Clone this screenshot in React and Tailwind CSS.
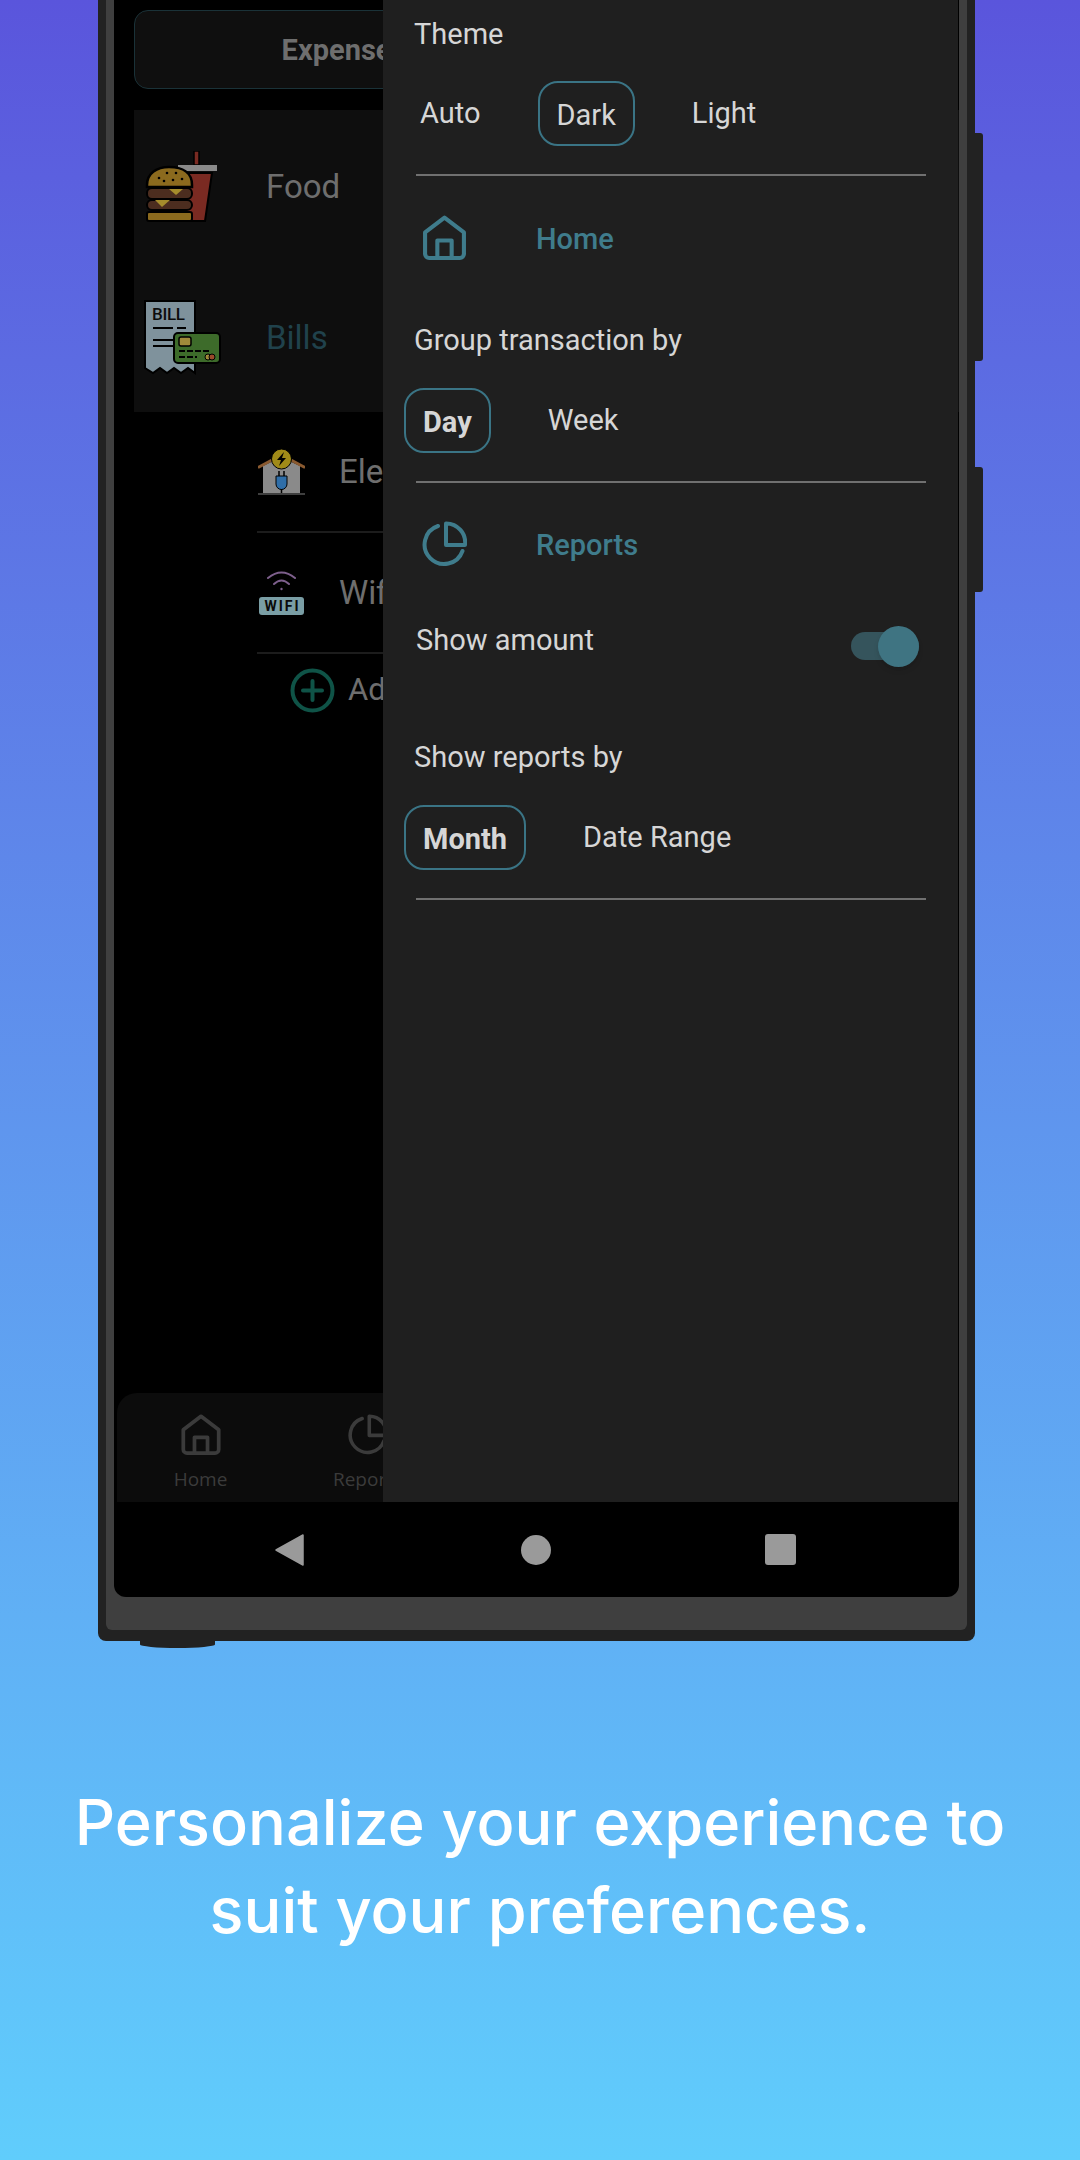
const TEAL = '#3f7c8c'

const HomeIcon = ({ className, color = TEAL }) => (
  <svg viewBox="0 0 42 44" className={className} fill="none" stroke={color} strokeWidth="4" strokeLinejoin="round">
    <path d="M21 2.5 L40 17 V38 a4 4 0 0 1 -4 4 H6 a4 4 0 0 1 -4 -4 V17 Z" />
    <path d="M14 42 V25 H28 V42" />
  </svg>
)

const PieIcon = ({ className, color = TEAL }) => (
  <svg viewBox="0 0 46 46" className={className} fill="none" stroke={color} strokeWidth="4" strokeLinejoin="round">
    <path d="M17 5 A19.5 19.5 0 1 0 41.5 30" strokeLinecap="round" />
    <path d="M25 2.5 A19 19 0 0 1 44 24 H25 Z" />
  </svg>
)

const BurgerIcon = () => (
  <svg viewBox="0 0 74 72" className="w-[74px] h-[72px] shrink-0">
    <rect x="49" y="0" width="5" height="14" fill="#7a2a22" stroke="#000" strokeWidth="1.5" />
    <path d="M36 22 L67 22 L60 70 L36 70 Z" fill="#7a2a22" stroke="#000" strokeWidth="2" />
    <path d="M33 14 H72 V20 H33 Z" fill="#8a8a8a" />
    <path d="M2 34 C2 22 12 16 24 16 C38 16 47 22 47 34 V36 H2 Z" fill="#8b6a1e" stroke="#000" strokeWidth="2.5" />
    <g fill="#000">
      <circle cx="14" cy="27" r="1.3" /><circle cx="22" cy="22" r="1.3" /><circle cx="31" cy="22" r="1.3" />
      <circle cx="19" cy="30" r="1.3" /><circle cx="28" cy="29" r="1.3" /><circle cx="37" cy="28" r="1.3" />
    </g>
    <rect x="2" y="37" width="45" height="11" rx="5" fill="#4c2d1f" stroke="#000" strokeWidth="2" />
    <rect x="2" y="49" width="45" height="10" rx="5" fill="#4c2d1f" stroke="#000" strokeWidth="2" />
    <path d="M24 38 H38 L31 44 Z" fill="#a58c2c" />
    <path d="M10 49 H25 L17 56 Z" fill="#a58c2c" />
    <rect x="2" y="61" width="45" height="9" rx="2" fill="#8b6a1e" stroke="#000" strokeWidth="2" />
  </svg>
)

const BillIcon = () => (
  <svg viewBox="0 0 78 76" className="w-[78px] h-[76px] shrink-0">
    <path d="M2 1 H52 V73 L45 68 L38 73 L31 68 L24 73 L17 68 L10 73 L2 68 Z" fill="#7f929c" stroke="#000" strokeWidth="2" />
    <text x="9" y="20" fontFamily="Roboto, sans-serif" fontSize="17" fontWeight="500" fill="#0c0c0c" textLength="33">BILL</text>
    <path d="M10 28 H30 M34 28 H43 M10 40 H30 M10 46 H30" stroke="#000" strokeWidth="2" />
    <rect x="31" y="33" width="46" height="30" rx="4" fill="#3d6b2a" stroke="#000" strokeWidth="2" />
    <rect x="36" y="37" width="12" height="9" rx="2" fill="#a08a3a" stroke="#000" strokeWidth="1.5" />
    <path d="M36 51 H66 M36 57 H54" stroke="#000" strokeWidth="2" strokeDasharray="6 2" />
    <circle cx="65" cy="57" r="3" fill="#a08a3a" stroke="#000" />
    <circle cx="69" cy="57" r="3" fill="#9a4a2a" stroke="#000" />
  </svg>
)

const ElectricIcon = () => (
  <svg viewBox="0 0 47 46" className="w-[47px] h-[46px] shrink-0 ml-[1px]">
    <path d="M5 17 L23 8 L42 17 V44 H5 Z" fill="#8a8a8a" />
    <path d="M1 18 L14 11 M46 18 L33 11" stroke="#8a5a30" strokeWidth="3" strokeLinecap="round" />
    <circle cx="23.5" cy="10" r="10" fill="#a08a18" stroke="#000" strokeWidth="1" />
    <path d="M26 3 L19 11 H23 L21 17 L28 9 H24 Z" fill="#000" />
    <path d="M18 27 H29 V35 a5 5 0 0 1 -11 0 Z" fill="#2f6ea8" stroke="#000" strokeWidth="1" />
    <path d="M21 22 V27 M26 22 V27 M23.5 40 V45" stroke="#000" strokeWidth="1.5" />
    <path d="M0 45 H47" stroke="#555" strokeWidth="1.5" />
  </svg>
)

const WifiIcon = () => (
  <svg viewBox="0 0 47 46" className="w-[47px] h-[46px] shrink-0 ml-[1px]">
    <path d="M10 8 Q23.5 -3 37 8" fill="none" stroke="#7d5f8c" strokeWidth="2" strokeLinecap="round" />
    <path d="M16 14 Q23.5 7 31 14" fill="none" stroke="#7d5f8c" strokeWidth="2" strokeLinecap="round" />
    <circle cx="23.5" cy="19" r="1.2" fill="#7d5f8c" />
    <rect x="1" y="27" width="45" height="18" rx="3" fill="#7a9ea5" />
    <text x="23.5" y="41" textAnchor="middle" fontFamily="Roboto, sans-serif" fontSize="14" fontWeight="700" fill="#0a0a0a" textLength="34">WIFI</text>
  </svg>
)

const PlusIcon = () => (
  <svg viewBox="0 0 45 45" className="w-[45px] h-[45px] shrink-0" fill="none" stroke="#0f5347" strokeWidth="4">
    <circle cx="22.5" cy="22.5" r="20" />
    <path d="M22.5 13 V32 M13 22.5 H32" strokeLinecap="round" />
  </svg>
)

const Option = ({ label, selected, bold }) => (
  <div
    className={
      selected
        ? `h-[65px] px-[17px] pt-[3px] flex items-center rounded-[20px] border-2 border-[#3a7485] ${bold ? 'font-bold' : ''}`
        : 'h-[65px] px-[20px] pb-[1px] flex items-center'
    }
  >
    {label}
  </div>
)

const Divider = ({ className = '' }) => <div className={`h-[2px] w-[510px] ml-[33px] bg-[#707070] ${className}`} />

const SectionTitle = ({ icon, label, className = '' }) => (
  <div className={`flex items-center ml-[40px] ${className}`}>
    <div className="w-[113px] shrink-0">{icon}</div>
    <span className="font-medium pt-[2px]" style={{ color: TEAL }}>{label}</span>
  </div>
)

const Drawer = () => (
  <div className="absolute top-0 bottom-0 left-[269px] w-[575px] bg-[#1f1f1f] text-[#d6d6d6] text-[29px] leading-[32px] flex flex-col">
    <div className="ml-[31px] mt-[18px]">Theme</div>
    <div className="flex gap-[37px] ml-[17px] mt-[31px]">
      <Option label="Auto" />
      <Option label="Dark" selected />
      <Option label="Light" />
    </div>
    <Divider className="mt-[28px]" />
    <SectionTitle className="mt-[39px]" icon={<HomeIcon className="w-[43px] h-[45px]" />} label="Home" />
    <div className="ml-[31px] mt-[64px]">Group transaction by</div>
    <div className="flex gap-[37px] ml-[21px] mt-[32px]">
      <Option label="Day" selected bold />
      <Option label="Week" />
    </div>
    <Divider className="mt-[28px]" />
    <SectionTitle className="mt-[38px]" icon={<PieIcon className="w-[46px] h-[46px] -ml-[2px]" />} label="Reports" />
    <div className="flex justify-between items-start ml-[33px] mr-[39px] mt-[57px]">
      <span>Show amount</span>
      <div className="relative w-[68px] h-[28px] mt-[8px] rounded-full bg-[#35545c]">
        <div className="absolute -top-[6px] right-0 w-[41px] h-[41px] rounded-full bg-[#3f7482] shadow-md" />
      </div>
    </div>
    <div className="ml-[31px] mt-[81px]">Show reports by</div>
    <div className="flex gap-[37px] ml-[21px] mt-[32px]">
      <Option label="Month" selected bold />
      <Option label="Date Range" />
    </div>
    <Divider className="mt-[28px]" />
  </div>
)

const SubRow = ({ icon, label }) => (
  <div className="flex items-center gap-[34px] h-[121px] border-b-2 border-[#1c1c1c]">
    {icon}
    <span>{label}</span>
  </div>
)

const App = () => {
  return (
    <div
      className="w-[1080px] h-[2160px] overflow-hidden flex flex-col bg-gradient-to-b from-[#5a55dc] to-[#60cdfc]"
      style={{ fontFamily: 'Roboto, sans-serif' }}
    >
      {/* phone */}
      <div className="relative shrink-0 w-[877px] h-[1641px] ml-[98px] px-[8px] pb-[11px] bg-[#222222] rounded-b-[8px]">
        <div className="absolute left-full top-[133px] w-[8px] h-[228px] bg-[#222222] rounded-r-[3px]" />
        <div className="absolute left-full top-[467px] w-[8px] h-[125px] bg-[#222222] rounded-r-[3px]" />
        <div className="absolute top-full left-[42px] w-[75px] h-[7px] bg-[#222222] rounded-b-[50%]" />

        <div className="h-full px-[8px] pb-[33px] bg-[#3f3f3f] rounded-b-[6px]">
          <div className="relative h-full bg-black rounded-b-[12px] overflow-hidden flex flex-col">
            <div className="relative flex-1 flex flex-col justify-between overflow-hidden">
              <div className="pt-[10px] pl-[20px] text-[#6e6e6e] text-[33px]">
                <div className="w-[420px] h-[79px] pt-[2px] flex items-center justify-center rounded-[14px] border border-[#1a3238] bg-[#0f0f0f] text-[29px] font-bold">
                  Expenses
                </div>

                <div className="mt-[21px] bg-[#0e0e0e] h-[302px] flex flex-col">
                  <div className="h-[154px] flex items-center pl-[11px]">
                    <BurgerIcon />
                    <span className="ml-[47px]">Food</span>
                  </div>
                  <div className="h-[148px] flex items-center pl-[9px]">
                    <BillIcon />
                    <span className="ml-[45px] text-[#20424c]">Bills</span>
                  </div>
                </div>

                <div className="ml-[123px] w-[600px]">
                  <SubRow icon={<ElectricIcon />} label="Electricity" />
                  <SubRow icon={<WifiIcon />} label="Wifi" />
                  <div className="flex items-center gap-[13px] pl-[33px] h-[72px] text-[31px]">
                    <PlusIcon />
                    <span>Add</span>
                  </div>
                </div>
              </div>

              <div className="ml-[3px] w-[700px] h-[109px] pt-[21px] bg-[#0c0c0c] rounded-tl-[20px] flex text-[#3b3b3b] text-[19px]" style={{ fontFamily: '"Open Sans", sans-serif' }}>
                <div className="w-[167px] flex flex-col items-center gap-[13px]">
                  <HomeIcon className="w-[40px] h-[41px]" color="#3b3b3b" />
                  <span className="leading-[22px]">Home</span>
                </div>
                <div className="w-[167px] flex flex-col items-center gap-[13px]">
                  <PieIcon className="w-[41px] h-[41px]" color="#3b3b3b" />
                  <span className="leading-[22px]">Reports</span>
                </div>
              </div>

              <Drawer />
            </div>

            {/* android nav */}
            <div className="h-[95px] shrink-0 flex items-center justify-between pl-[161px] pr-[163px]">
              <svg viewBox="0 0 29 32" className="w-[29px] h-[32px]">
                <path d="M1 16 L28 1 V31 Z" fill="#9a9a9a" stroke="#9a9a9a" strokeWidth="1.5" strokeLinejoin="round" />
              </svg>
              <div className="w-[30px] h-[30px] ml-[2px] rounded-full bg-[#9a9a9a]" />
              <div className="w-[31px] h-[31px] rounded-[3px] bg-[#9a9a9a]" />
            </div>
          </div>
        </div>
      </div>

      <p
        className="mt-[137px] text-center text-white text-[63px] font-medium leading-[88px]"
        style={{ fontFamily: 'Inter, sans-serif' }}
      >
        Personalize your experience to
        <br />
        suit your preferences.
      </p>
    </div>
  )
}

export default App
